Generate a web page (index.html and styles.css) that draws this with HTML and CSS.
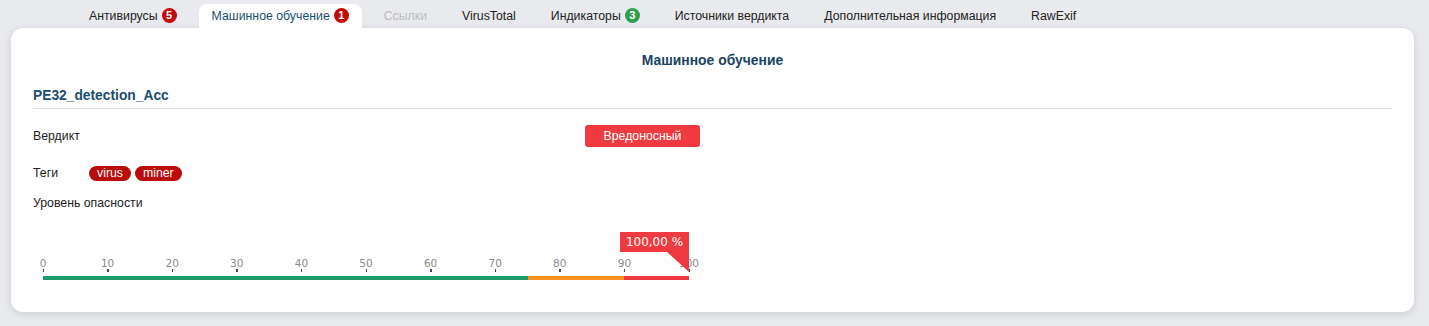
FILE: index.html
```html
<!DOCTYPE html>
<html lang="ru">
<head>
<meta charset="utf-8">
<title>Машинное обучение</title>
<link rel="stylesheet" href="styles.css">
</head>
<body>
<div class="page">
  <nav class="tabs">
    <div class="tab">Антивирусы <span class="badge red">5</span></div>
    <div class="tab active">Машинное обучение <span class="badge red">1</span></div>
    <div class="tab disabled">Ссылки</div>
    <div class="tab">VirusTotal</div>
    <div class="tab">Индикаторы <span class="badge green">3</span></div>
    <div class="tab">Источники вердикта</div>
    <div class="tab">Дополнительная информация</div>
    <div class="tab">RawExif</div>
  </nav>
  <section class="card">
    <h2 class="card-title">Машинное обучение</h2>
    <h3 class="model-title">PE32_detection_Acc</h3>
    <div class="row verdict-row">
      <div class="label">Вердикт</div>
      <div class="value"><span class="verdict">Вредоносный</span></div>
    </div>
    <div class="row tags-row">
      <div class="label tags-label">Теги</div>
      <div class="tags"><span class="tag">virus</span><span class="tag">miner</span></div>
    </div>
    <div class="label danger-label">Уровень опасности</div>
    <div class="scale">
      <div class="tooltip">100,00 %</div>
      <div class="ticks">
        <div class="tick" style="left:0%"><span>0</span></div>
        <div class="tick" style="left:10%"><span>10</span></div>
        <div class="tick" style="left:20%"><span>20</span></div>
        <div class="tick" style="left:30%"><span>30</span></div>
        <div class="tick" style="left:40%"><span>40</span></div>
        <div class="tick" style="left:50%"><span>50</span></div>
        <div class="tick" style="left:60%"><span>60</span></div>
        <div class="tick" style="left:70%"><span>70</span></div>
        <div class="tick" style="left:80%"><span>80</span></div>
        <div class="tick" style="left:90%"><span>90</span></div>
        <div class="tick" style="left:100%"><span>100</span></div>
      </div>
      <div class="bar">
        <div class="seg seg-green" style="width:75%"></div>
        <div class="seg seg-orange" style="width:15%"></div>
        <div class="seg seg-red" style="width:10%"></div>
      </div>
    </div>
  </section>
</div>
</body>
</html>
```
FILE: styles.css
```css
* { box-sizing: border-box; }
html, body { margin: 0; padding: 0; }
body {
  background: #e9eaee;
  font-family: "Liberation Sans", Arial, sans-serif;
  font-size: 12.3px;
  color: #222;
  width: 1429px;
  height: 326px;
  overflow: hidden;
}
.page {
  padding: 4px 15px 0 11px;
}
.tabs {
  display: flex;
  gap: 9px;
  padding-left: 65px;
  height: 24px;
  font-size: 12.3px;
}
.tab {
  display: flex;
  align-items: center;
  gap: 4px;
  padding: 0 13px;
  height: 24px;
  color: #222;
  border-radius: 8px 8px 0 0;
  white-space: nowrap;
}
.tab.active {
  background: #fff;
  color: #1d4e6e;
}
.tab.disabled { color: #b9bcc2; }
.badge {
  display: inline-flex;
  align-items: center;
  justify-content: center;
  width: 15px;
  height: 15px;
  border-radius: 50%;
  color: #fff;
  font-weight: bold;
  font-size: 11px;
  margin-top: -2px;
}
.badge.red { background: #c30a0a; }
.badge.green { background: #2f9e4f; }
.card {
  background: #fff;
  border-radius: 12px;
  box-shadow: 0 2px 8px rgba(0,0,0,0.12);
  height: 284px;
  padding: 0 22px;
}
.card-title {
  margin: 0;
  padding-top: 24px;
  text-align: center;
  font-size: 13.9px;
  font-weight: bold;
  color: #1a4462;
  line-height: 16px;
}
.model-title {
  margin: 0;
  margin-top: 19px;
  font-size: 13.8px;
  font-weight: bold;
  color: #1d4e6e;
  line-height: 18px;
  padding-bottom: 3px;
  border-bottom: 1px solid #e0e0e0;
}
.row {
  display: flex;
  align-items: center;
}
.verdict-row {
  margin-top: 16px;
  height: 22px;
}
.verdict-row .label { width: 552px; }
.verdict {
  display: inline-block;
  background: #ef3b3f;
  color: #fff;
  border-radius: 3px;
  width: 115px;
  height: 22px;
  line-height: 22px;
  text-align: center;
  font-size: 12.3px;
}
.tags-row {
  margin-top: 18px;
  height: 16px;
}
.tags-label { width: 56px; }
.tags { display: flex; gap: 4px; }
.tag {
  display: inline-block;
  background: #bb0a0a;
  color: #fff;
  border-radius: 8px;
  height: 15px;
  line-height: 15px;
  padding: 0 8px;
  font-size: 12.3px;
}
.label { color: #222; }
.danger-label {
  margin-top: 14px;
  line-height: 16px;
}
.scale {
  position: relative;
  margin-left: 10px;
  width: 646px;
  margin-top: 21px;
  padding-top: 22px;
  font-family: "DejaVu Sans", sans-serif;
}
.ticks {
  position: relative;
  height: 20px;
}
.tick {
  position: absolute;
  top: 0;
  width: 0;
}
.tick span {
  position: absolute;
  left: 0;
  top: 3px;
  transform: translateX(-50%);
  font-size: 10.5px;
  color: #8a8a8a;
  line-height: 12px;
}
.tick::after {
  content: "";
  position: absolute;
  left: -0.5px;
  top: 15px;
  width: 1.5px;
  height: 3px;
  background: #3c4a5a;
}
.bar {
  display: flex;
  height: 4px;
  margin-top: 2px;
}
.seg-green { background: #1f9a6c; }
.seg-orange { background: #f7931e; }
.seg-red { background: #ef3b3f; }
.tooltip {
  position: absolute;
  right: 0;
  top: 0;
  width: 69px;
  height: 20px;
  line-height: 20px;
  background: #ef3b3f;
  color: #fff;
  text-align: center;
  font-size: 12px;
  z-index: 2;
}
.tooltip::after {
  content: "";
  position: absolute;
  right: 0;
  top: 20px;
  border-left: 22px solid transparent;
  border-top: 20px solid #ef3b3f;
}
```
